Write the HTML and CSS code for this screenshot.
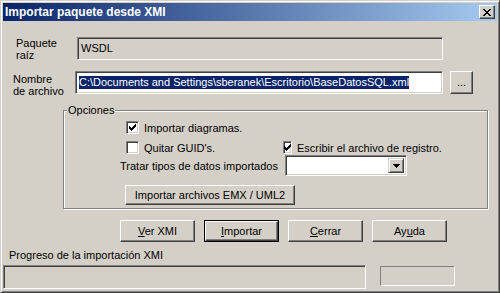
FILE: index.html
```html
<!DOCTYPE html>
<html lang="es">
  <head>
    <meta charset="UTF-8" />
    <title>Importar paquete desde XMI</title>
    <link rel="stylesheet" href="styles.css">
  </head>
  <body>
    <div class="window">
      <div class="titlebar">
        <span class="title">Importar paquete desde XMI</span>
        <span class="close">
          <svg width="8" height="7" viewBox="0 0 8 7" shape-rendering="crispEdges">
            <path d="M0 0h2v1h-2zM6 0h2v1h-2zM1 1h2v1h-2zM5 1h2v1h-2zM2 2h4v1h-4zM3 3h2v1h-2zM2 4h4v1h-4zM1 5h2v1h-2zM5 5h2v1h-2zM0 6h2v1h-2zM6 6h2v1h-2z" fill="#000"/>
          </svg>
        </span>
      </div>

      <div class="content">
        <div class="row row-package">
          <div class="label label-package">Paquete<br>raíz</div>
          <div class="field field-disabled field-package">WSDL</div>
        </div>

        <div class="row row-file">
          <div class="label label-file">Nombre<br>de archivo</div>
          <div class="field field-file"><span class="selected">C:\Documents and Settings\sberanek\Escritorio\BaseDatosSQL.xml</span></div>
          <button class="btn btn-browse">...</button>
        </div>

        <fieldset class="group">
          <legend>Opciones</legend>
          <div class="options">
            <label class="check check-diagrams">
              <span class="box"><svg width="7" height="7" viewBox="0 0 7 7" shape-rendering="crispEdges"><path d="M6 0h1v3h-1zM5 1h1v3h-1zM4 2h1v3h-1zM3 3h1v3h-1zM2 4h1v3h-1zM1 3h1v3h-1zM0 2h1v3h-1z" fill="#000"/></svg></span>
              Importar diagramas.
            </label>
            <span></span>

            <label class="check check-guid">
              <span class="box"></span>
              Quitar GUID's.
            </label>
            <label class="check check-log">
              <span class="box"><svg width="7" height="7" viewBox="0 0 7 7" shape-rendering="crispEdges"><path d="M6 0h1v3h-1zM5 1h1v3h-1zM4 2h1v3h-1zM3 3h1v3h-1zM2 4h1v3h-1zM1 3h1v3h-1zM0 2h1v3h-1z" fill="#000"/></svg></span>
              Escribir el archivo de registro.
            </label>

            <span class="opt-label">Tratar tipos de datos importados</span>
            <div class="combo">
              <span class="combo-value"></span>
              <span class="combo-arrow">
                <svg width="7" height="4" viewBox="0 0 7 4" shape-rendering="crispEdges"><path d="M0 0h7v1h-7zM1 1h5v1h-5zM2 2h3v1h-3zM3 3h1v1h-1z" fill="#000"/></svg>
              </span>
            </div>

            <button class="btn btn-emx">Importar archivos EMX / UML2</button>
          </div>
        </fieldset>

        <div class="actions">
          <button class="btn"><u>V</u>er XMI</button>
          <button class="btn btn-default"><span class="inner"><u>I</u>mportar</span></button>
          <button class="btn"><u>C</u>errar</button>
          <button class="btn">Ay<u>u</u>da</button>
        </div>

        <div class="progress-label">Progreso de la importación XMI</div>
        <div class="progress-row">
          <div class="progress"></div>
          <div class="status"></div>
        </div>
      </div>
    </div>
  </body>
</html>
```

FILE: styles.css
```css
* {
  box-sizing: border-box;
}
body {
  margin: 0;
  font: 11px "Liberation Sans", Arial, sans-serif;
  color: #000;
  background: #d4d0c8;
}
.window {
  width: 500px;
  height: 293px;
  padding: 2px 2px 1px 2px;
  background: #d4d0c8;
  border: 1px solid;
  border-color: #d4d0c8 #404040 #404040 #d4d0c8;
  box-shadow: inset 1px 1px #fff, inset -1px -1px #808080;
}
.titlebar {
  display: flex;
  align-items: center;
  justify-content: space-between;
  height: 18px;
  padding: 0 2px;
  background: linear-gradient(to right, #0a246a, #a6caf0);
}
.title {
  color: #fff;
  font-weight: bold;
  font-size: 12px;
  line-height: 18px;
}
.close {
  display: flex;
  align-items: center;
  justify-content: center;
  width: 16px;
  height: 14px;
  background: #d4d0c8;
  border: 1px solid;
  border-color: #fff #404040 #404040 #fff;
  box-shadow: inset -1px -1px #808080;
}

/* top fields */
.row {
  display: flex;
  align-items: flex-start;
}
.row-package {
  margin-top: 16px;
}
.row-file {
  margin-top: 10px;
}
.label {
  line-height: 12px;
}
.label-package {
  width: 61px;
  margin-left: 13px;
  margin-top: 0;
}
.label-file {
  width: 62px;
  margin-left: 10px;
  margin-top: 2px;
}
.field {
  height: 23px;
  padding: 4px 2px 0 3px;
  line-height: 13px;
  white-space: nowrap;
  overflow: hidden;
  border: 1px solid;
  border-color: #808080 #fff #fff #808080;
  box-shadow: inset 1px 1px #404040, inset -1px -1px #d4d0c8;
}
.field-package {
  width: 366px;
  padding-left: 3px;
  background: #d4d0c8;
}
.field-file {
  width: 368px;
  background: #fff;
}
.selected {
  display: inline-block;
  background: #0a246a;
  color: #fff;
}

/* buttons */
.btn {
  font: inherit;
  color: #000;
  padding: 0;
  background: #d4d0c8;
  border: 1px solid;
  border-color: #fff #404040 #404040 #fff;
  box-shadow: inset -1px -1px #808080, inset 1px 1px #d4d0c8;
}
.btn u {
  text-decoration-thickness: 1px;
}
.btn-browse {
  width: 23px;
  height: 23px;
  margin-left: 7px;
  line-height: 19px;
}

/* options group */
.group {
  width: 425px;
  margin: 7px 0 0 60px;
  padding: 0 0 3px 0;
  border: 1px solid #808080;
  box-shadow: inset 1px 1px #fff, 1px 1px #fff;
  min-width: 0;
}
.group legend {
  margin-left: 3px;
  padding: 0 1px;
  line-height: 13px;
  background: #d4d0c8;
}
.options {
  display: grid;
  grid-template-columns: 163px 130px;
  align-items: center;
  margin: 4px 0 0 56px;
}
.check {
  display: flex;
  align-items: center;
  gap: 5px;
  height: 13px;
  white-space: nowrap;
}
.box {
  display: flex;
  align-items: center;
  justify-content: center;
  width: 13px;
  height: 13px;
  background: #fff;
  border: 1px solid;
  border-color: #808080 #fff #fff #808080;
  box-shadow: inset 1px 1px #404040, inset -1px -1px #d4d0c8;
}
.check-diagrams {
  margin-left: 6px;
}
.check-guid {
  margin: 7px 0 0 6px;
}
.check-log {
  margin-top: 7px;
}
.opt-label {
  margin-top: 1px;
  white-space: nowrap;
}
.combo {
  display: flex;
  width: 122px;
  height: 21px;
  margin: 1px 0 0 2px;
  padding: 2px;
  background: #fff;
  border: 1px solid;
  border-color: #808080 #fff #fff #808080;
  box-shadow: inset 1px 1px #404040, inset -1px -1px #d4d0c8;
}
.combo-value {
  flex: 1;
}
.combo-arrow {
  display: flex;
  align-items: center;
  justify-content: center;
  width: 16px;
  height: 15px;
  background: #d4d0c8;
  border: 1px solid;
  border-color: #d4d0c8 #404040 #404040 #d4d0c8;
  box-shadow: inset 1px 1px #fff, inset -1px -1px #808080;
}
.btn-emx {
  grid-column: 1 / span 2;
  justify-self: start;
  width: 170px;
  height: 20px;
  margin: 9px 0 0 5px;
}

/* bottom */
.actions {
  display: flex;
  gap: 9px;
  margin: 11px 0 0 117px;
}
.actions .btn {
  width: 75px;
  height: 22px;
}
.btn-default {
  border: 1px solid #000;
  box-shadow: none;
  padding: 0;
}
.btn-default .inner {
  display: flex;
  align-items: center;
  justify-content: center;
  height: 100%;
  border: 1px solid;
  border-color: #fff #404040 #404040 #fff;
  box-shadow: inset -1px -1px #808080;
}
.progress-label {
  margin: 7px 0 0 6px;
  line-height: 13px;
}
.progress-row {
  display: flex;
  align-items: flex-start;
  margin-top: 3px;
}
.progress {
  width: 363px;
  height: 24px;
  border: 1px solid;
  border-color: #808080 #fff #fff #808080;
  box-shadow: inset 1px 1px #404040, inset -1px -1px #d4d0c8;
}
.status {
  width: 75px;
  height: 20px;
  margin: 1px 0 0 14px;
  border: 1px solid;
  border-color: #808080 #fff #fff #808080;
}
```
